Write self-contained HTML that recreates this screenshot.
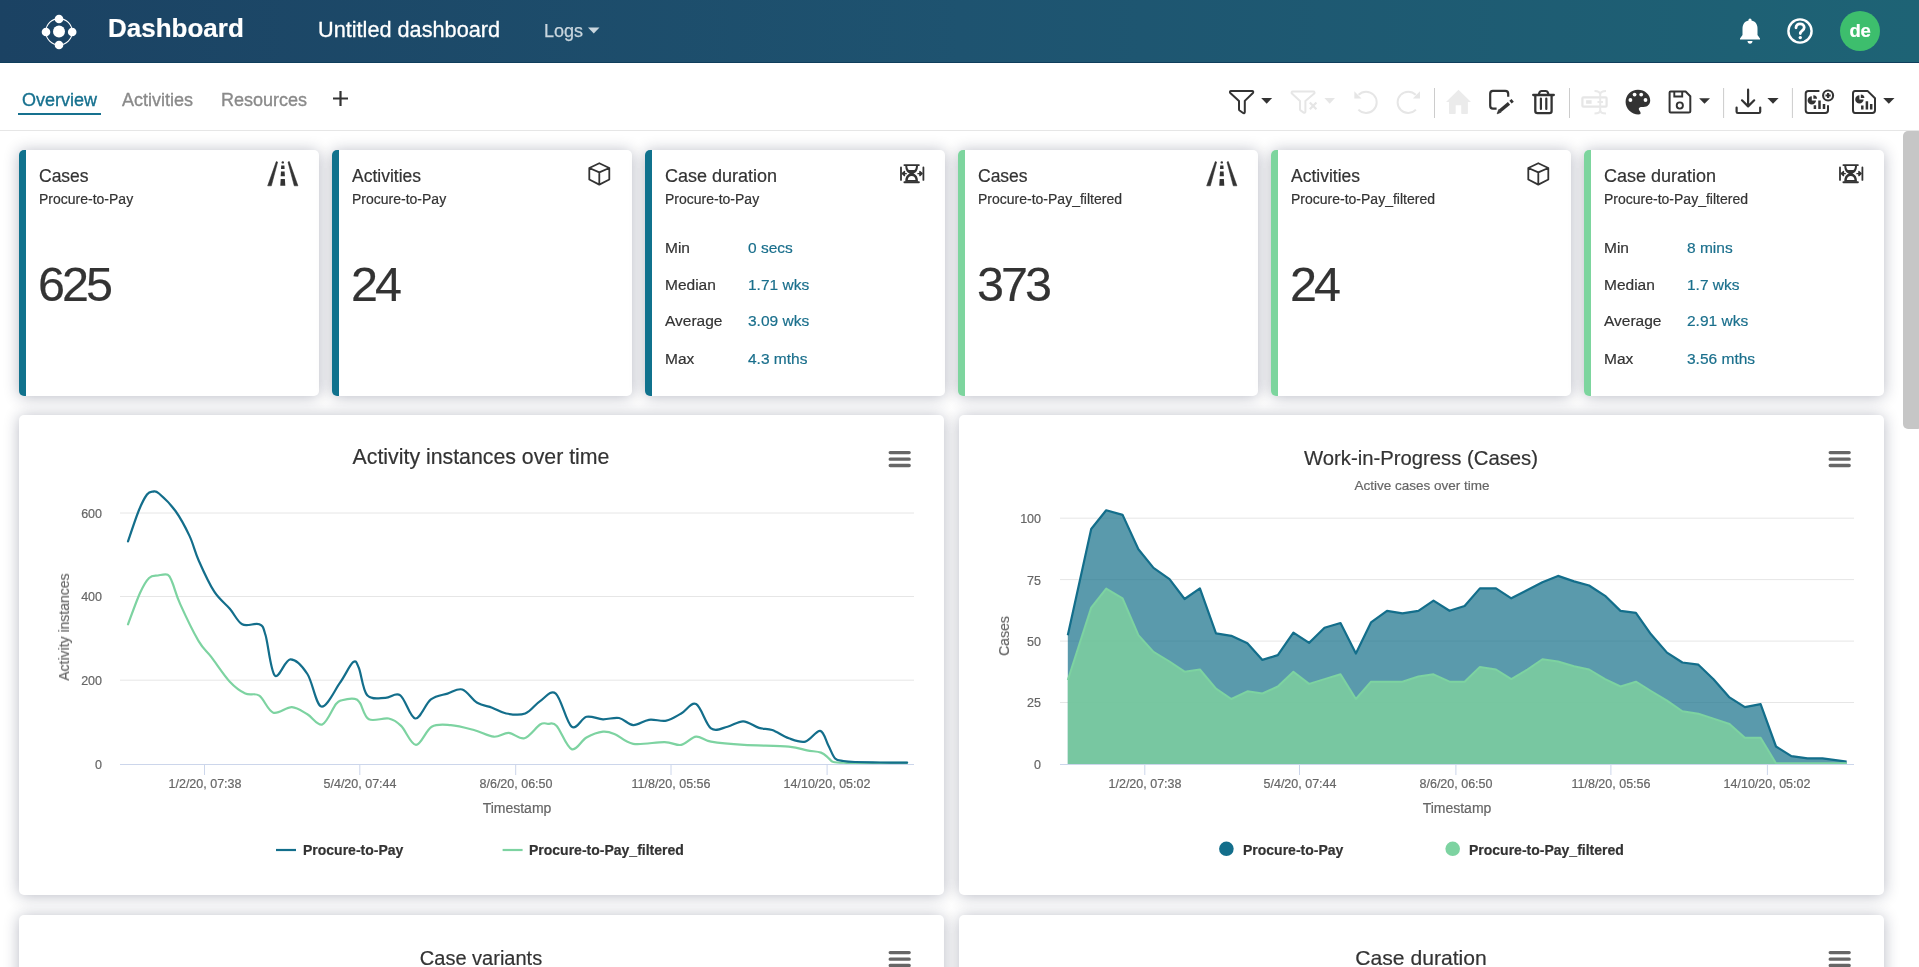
<!DOCTYPE html>
<html><head><meta charset="utf-8">
<style>
*{box-sizing:border-box;margin:0;padding:0}
html,body{width:1919px;height:967px;overflow:hidden;background:#fff;font-family:"Liberation Sans",sans-serif;color:#333;-webkit-font-smoothing:antialiased}
.abs{position:absolute}
#hdr{position:absolute;left:0;top:0;width:1919px;height:63px;border-bottom:1px solid #0f3e5c;background:linear-gradient(90deg,#1b4263 0%,#1e5370 50%,#1e6375 100%)}
.t{position:absolute;white-space:nowrap;line-height:1;will-change:transform;-webkit-text-stroke-width:0.2px}
#tabs{position:absolute;left:0;top:63px;width:1919px;height:68px;border-bottom:1px solid #e6e6e6;background:#fff}
.card{position:absolute;background:#fff;border-radius:5px;box-shadow:0 1px 15px rgba(20,25,60,0.3)}
.kpi{top:150px;width:300px;height:246px;overflow:hidden}
.kpi .bar{position:absolute;left:0;top:0;width:7px;height:100%}
.ch{top:415px;width:925px;height:480px}
.bt{top:915px;width:925px;height:100px}
#sb{position:absolute;left:1903px;top:131px;width:16px;height:836px;background:#fff}
#thumb{position:absolute;left:1903px;top:131px;width:20px;height:297.6px;background:#c6c6c6;border-radius:5px}
svg{position:absolute;overflow:visible}
</style></head><body>
<div id="hdr"></div>
<!-- logo -->
<svg class="abs" style="left:0;top:0" width="120" height="62">
  <circle cx="59" cy="31.8" r="13.2" fill="none" stroke="#fff" stroke-width="1.1"/>
  <circle cx="59" cy="31.5" r="6" fill="#fff"/>
  <circle cx="59" cy="19" r="4.3" fill="#fff"/>
  <circle cx="59" cy="45" r="4.3" fill="#fff"/>
  <circle cx="46" cy="32" r="4.3" fill="#fff"/>
  <circle cx="72.2" cy="32" r="4.3" fill="#fff"/>
</svg>
<div class="t" style="left:108px;top:15px;font-size:26px;font-weight:bold;color:#fff">Dashboard</div>
<div class="t" style="left:318px;top:18.5px;font-size:21.7px;color:#fff;-webkit-text-stroke:0.3px #fff">Untitled dashboard</div>
<div class="t" style="left:543.5px;top:21.5px;font-size:18px;color:#c9d6de;-webkit-text-stroke:0.25px #c9d6de">Logs</div>
<svg style="left:587px;top:27px" width="14" height="8"><path d="M1,0.5 L12.5,0.5 L6.75,6.5 Z" fill="#c9d6de"/></svg>

<!-- header right -->
<svg style="left:1738px;top:17px" width="24" height="28" viewBox="0 0 24 28">
  <path d="M12,1.5 C11,1.5 10.5,2.3 10.5,3 L10.5,3.6 C6.5,4.4 4.5,7.6 4.5,11.5 L4.5,18 L2,21.5 L2,22.5 L22,22.5 L22,21.5 L19.5,18 L19.5,11.5 C19.5,7.6 17.5,4.4 13.5,3.6 L13.5,3 C13.5,2.3 13,1.5 12,1.5 Z" fill="#fff"/>
  <path d="M9.5,24 L14.5,24 C14.5,25.5 13.5,26.8 12,26.8 C10.5,26.8 9.5,25.5 9.5,24 Z" fill="#fff"/>
</svg>
<svg style="left:1786px;top:17px" width="28" height="28" viewBox="0 0 28 28">
  <circle cx="14" cy="14" r="11.6" fill="none" stroke="#fff" stroke-width="2.4"/>
  <path d="M10,10.8 C10,8.3 11.8,6.8 14.1,6.8 C16.4,6.8 18.2,8.3 18.2,10.5 C18.2,13.5 14.3,13.6 14.3,16.6" fill="none" stroke="#fff" stroke-width="2.8" stroke-linecap="round"/>
  <circle cx="14.3" cy="20.6" r="1.7" fill="#fff"/>
</svg>
<div class="abs" style="left:1840px;top:10.5px;width:40px;height:40px;border-radius:50%;background:#3dbe6d"></div>
<div class="t" style="left:1840px;top:21.5px;width:40px;text-align:center;font-size:18.5px;font-weight:bold;letter-spacing:-0.3px;color:#fff">de</div>

<!-- tabs -->
<div id="tabs"></div>
<div class="t" style="left:22px;top:91px;font-size:18px;color:#17718f;-webkit-text-stroke:0.35px #17718f">Overview</div>
<div class="abs" style="left:18px;top:113px;width:83px;height:2px;background:#17718f"></div>
<div class="t" style="left:122px;top:91px;font-size:18px;color:#8a8a8a;-webkit-text-stroke:0.35px #8a8a8a">Activities</div>
<div class="t" style="left:221px;top:91px;font-size:18px;color:#8a8a8a;-webkit-text-stroke:0.35px #8a8a8a">Resources</div>
<svg style="left:332px;top:90px" width="17" height="17"><path d="M8.5,1 V16 M1,8.5 H16" stroke="#333" stroke-width="2.2"/></svg>

<!-- toolbar -->
<svg style="left:0;top:0" width="1919" height="130" viewBox="0 0 1919 130">
<path d="M1231,91 H1252.2 C1253.2,91 1253.6,92.2 1252.9,93 L1244.8,100.9 V112 C1244.8,113 1243.9,113.6 1243.1,113 L1239.6,110.5 C1239.2,110.2 1239,109.8 1239,109.3 V100.9 L1230.3,93 C1229.6,92.2 1230,91 1231,91 Z" fill="none" stroke="#333333" stroke-width="2" stroke-linejoin="round"/>
<path d="M1261.2,98.1 L1272.1,98.1 L1266.7,103.8 Z" fill="#333333"/>
<path d="M1292.6,91.6 H1313.5 C1314.5,91.6 1314.9,92.8 1314.2,93.6 L1305.4,100.9 V111.6 C1305.4,112.6 1304.5,113.2 1303.7,112.6 L1300.6,110.4 C1300.2,110.1 1300,109.7 1300,109.2 V100.9 L1291.9,93.6 C1291.2,92.8 1291.6,91.6 1292.6,91.6 Z" fill="none" stroke="#e6e6e6" stroke-width="2" stroke-linejoin="round"/>
<path d="M1309.8,102.4 L1316.4,109.2 M1316.4,102.4 L1309.8,109.2" stroke="#e6e6e6" stroke-width="2.2"/>
<path d="M1324.4,98.1 L1335.0,98.1 L1329.7,103.8 Z" fill="#e6e6e6"/>
<path d="M1358.6,94.8 A10.6,10.6 0 1 1 1358.4,109.6" fill="none" stroke="#e6e6e6" stroke-width="2"/>
<path d="M1354.3,91.2 V98.4 H1361.5 Z" fill="#e6e6e6"/>
<path d="M1415.7,94.8 A10.6,10.6 0 1 0 1415.9,109.6" fill="none" stroke="#e6e6e6" stroke-width="2"/>
<path d="M1420,91.2 V98.4 H1412.8 Z" fill="#e6e6e6"/>
<line x1="1434.5" x2="1434.5" y1="88" y2="118" stroke="#cccccc" stroke-width="1"/>
<line x1="1569.5" x2="1569.5" y1="88" y2="118" stroke="#cccccc" stroke-width="1"/>
<line x1="1723.6" x2="1723.6" y1="88" y2="118" stroke="#cccccc" stroke-width="1"/>
<line x1="1792.4" x2="1792.4" y1="88" y2="118" stroke="#cccccc" stroke-width="1"/>
<path d="M1458.5,89.7 L1471,101.9 H1467.9 V113 C1467.9,113.6 1467.4,114.1 1466.8,114.1 H1462.3 C1461.7,114.1 1461.2,113.6 1461.2,113 V105.3 H1455.7 V113 C1455.7,113.6 1455.2,114.1 1454.6,114.1 H1450.1 C1449.5,114.1 1449,113.6 1449,113 V101.9 H1446 Z" fill="#ebebeb"/>
<path d="M1508.2,96.8 V93.8 C1508.2,91.8 1507.2,90.9 1505.3,90.9 H1492.9 C1491,90.9 1490.2,91.8 1490.2,93.8 V105.8 C1490.2,107.7 1491,108.6 1492.9,108.6 H1496.6" fill="none" stroke="#333333" stroke-width="2.2"/>
<path d="M1499.8,111 L1509,103.4" stroke="#333333" stroke-width="3.5" stroke-linecap="butt"/>
<path d="M1500.9,112.3 L1498.7,109.7 L1497.2,113.8 Z" fill="#333333" stroke="#333333" stroke-width="0.8" stroke-linejoin="round"/>
<path d="M1510.5,102.2 L1512.7,100.4" stroke="#333333" stroke-width="3.5" stroke-linecap="butt"/>
<path d="M1533.2,95 H1553.8" stroke="#333333" stroke-width="2.3" stroke-linecap="round"/>
<path d="M1538.6,95 L1539.6,92.2 C1540,91.3 1540.6,91 1541.5,91 H1545.8 C1546.7,91 1547.3,91.3 1547.7,92.2 L1548.7,95" fill="none" stroke="#333333" stroke-width="2.2"/>
<path d="M1535.3,95 V111 C1535.3,112.5 1536.1,113.1 1537.5,113.1 H1549.5 C1550.9,113.1 1551.6,112.5 1551.6,111 V95" fill="none" stroke="#333333" stroke-width="2.3"/>
<path d="M1540.9,98.6 V109 M1546.3,98.6 V109" stroke="#333333" stroke-width="2.2" stroke-linecap="round"/>
<rect x="1582.4" y="97.3" width="24.2" height="9.4" rx="1" fill="none" stroke="#e6e6e6" stroke-width="2.2"/>
<rect x="1586.1" y="100.2" width="5.5" height="3.6" fill="#e6e6e6"/>
<path d="M1600.2,93.5 V111 M1594.5,91 C1597.5,91 1600.2,92 1600.2,94.5 C1600.2,92 1603,91 1606,91 M1594.5,113.5 C1597.5,113.5 1600.2,112.5 1600.2,110 C1600.2,112.5 1603,113.5 1606,113.5 M1597.5,102 H1603" fill="none" stroke="#e9e9e9" stroke-width="2"/>
<path d="M1637.9,89.7 C1644.8,89.7 1650.2,94.5 1650.2,100.3 C1650.2,104.3 1647.6,107 1643.5,107 H1641 C1639.6,107 1638.8,108 1638.8,109.1 C1638.8,109.9 1639.4,110.5 1639.9,111.3 C1640.4,112 1640.6,112.6 1640.6,113.2 C1640.6,114 1639.9,114.4 1638.4,114.4 C1631.6,114.4 1625.6,108.9 1625.6,102 C1625.6,95 1631,89.7 1637.9,89.7 Z" fill="#333333"/>
<circle cx="1634.6" cy="94.6" r="1.9" fill="#fff"/>
<circle cx="1641.2" cy="94.6" r="1.9" fill="#fff"/>
<circle cx="1630.4" cy="100.0" r="1.9" fill="#fff"/>
<circle cx="1645.5" cy="100.0" r="1.9" fill="#fff"/>
<path d="M1670.6,91.5 H1685.6 L1690.3,96.2 V111.5 C1690.3,112.3 1689.6,112.6 1688.8,112.6 H1670.6 C1669.9,112.6 1669.6,112.2 1669.6,111.5 V92.6 C1669.6,91.9 1669.9,91.5 1670.6,91.5 Z" fill="none" stroke="#333333" stroke-width="2" stroke-linejoin="round"/>
<path d="M1674.3,91.5 V96.5 H1682.2 V91.5" fill="none" stroke="#333333" stroke-width="1.9"/>
<circle cx="1679.8" cy="105.5" r="3.1" fill="none" stroke="#333333" stroke-width="1.9"/>
<path d="M1699.1,98.3 L1710.0,98.3 L1704.5,103.8 Z" fill="#333333"/>
<path d="M1748.1,89.7 V106 M1742,100.3 L1748.1,106.4 L1754.2,100.3" fill="none" stroke="#333333" stroke-width="2.2" stroke-linecap="round" stroke-linejoin="round"/>
<path d="M1736.6,107.6 V111.8 C1736.6,112.6 1737.1,113 1737.9,113 H1758.9 C1759.7,113 1760.2,112.6 1760.2,111.8 V107.6" fill="none" stroke="#333333" stroke-width="2.2" stroke-linecap="round"/>
<path d="M1767.4,98.1 L1778.6,98.1 L1773.0,103.8 Z" fill="#333333"/>
<path d="M1819.4,90.9 H1808.4 C1806.6,90.9 1805.7,91.8 1805.7,93.6 V110.2 C1805.7,112 1806.6,112.9 1808.4,112.9 H1825.3 C1827.1,112.9 1828,112 1828,110.2 V105.2" fill="none" stroke="#333333" stroke-width="2"/>
<path d="M1811.8,96.2 A4.2,4.2 0 1 0 1816,100.4 H1811.8 Z" fill="#333333"/>
<path d="M1813.4,95.2 A3.6,3.6 0 0 1 1817,98.8 H1813.4 Z" fill="#333333"/>
<path d="M1814.9,105.2 V109 M1819.5,100.6 V109 M1824,103.9 V109" stroke="#333333" stroke-width="2.5"/>
<circle cx="1828.1" cy="95.5" r="5" fill="none" stroke="#333333" stroke-width="2.1"/>
<path d="M1828.1,92.9 V98.1 M1825.5,95.5 H1830.7" stroke="#333333" stroke-width="2.2"/>
<path d="M1855,90.9 H1867.5 L1875,98.2 V110.2 C1875,112 1874.1,112.9 1872.3,112.9 H1855 C1853.8,112.9 1853,112 1853,110.2 V93.6 C1853,91.8 1853.8,90.9 1855,90.9 Z" fill="none" stroke="#333333" stroke-width="2" stroke-linejoin="round"/>
<path d="M1859.4,95.2 A4.2,4.2 0 1 0 1863.6,99.4 H1859.4 Z" fill="#333333"/>
<path d="M1860.8,94.4 A3.6,3.6 0 0 1 1864.4,98 H1860.8 Z" fill="#333333"/>
<path d="M1862.3,105.4 V109.6 M1866.9,101.2 V109.6 M1871.2,104 V109.6" stroke="#333333" stroke-width="2.5"/>
<path d="M1883.2,98.1 L1894.5,98.1 L1888.8,103.8 Z" fill="#333333"/>
</svg>

<!-- scrollbar -->
<div id="thumb"></div>

<!-- KPI cards -->
<div class="card kpi" style="left:19px"><div class="bar" style="background:#10728d"></div></div>
<div class="t" style="left:38.5px;top:167.8px;font-size:17.5px;color:#333;font-weight:normal;">Cases</div>
<div class="t" style="left:38.5px;top:191.5px;font-size:14.0px;color:#333;font-weight:normal;">Procure-to-Pay</div>
<svg style="left:267px;top:161px" width="32" height="26" viewBox="0 0 32 26"><path d="M9.3,0.6 L10.6,1.1 L4.3,24.8 H0.7 Z" fill="#333" stroke="#333" stroke-width="0.6" stroke-linejoin="round"/><path d="M22.3,0.6 L21,1.1 L27.3,24.8 H30.9 Z" fill="#333" stroke="#333" stroke-width="0.6" stroke-linejoin="round"/><circle cx="15.8" cy="1.4" r="1.2" fill="#333"/><path d="M14.2,4.6 H17.4 L17.6,7.9 H14 Z" fill="#333"/><path d="M14,10.4 H17.6 L17.9,15.3 H13.7 Z" fill="#333"/><path d="M13.7,17.9 H17.9 L18.3,24.8 H13.3 Z" fill="#333"/></svg>
<div class="t" style="left:38.0px;top:259.7px;font-size:48.5px;color:#333;font-weight:normal;letter-spacing:-3px">625</div>
<div class="card kpi" style="left:332px"><div class="bar" style="background:#10728d"></div></div>
<div class="t" style="left:351.5px;top:167.8px;font-size:17.5px;color:#333;font-weight:normal;">Activities</div>
<div class="t" style="left:351.5px;top:191.5px;font-size:14.0px;color:#333;font-weight:normal;">Procure-to-Pay</div>
<svg style="left:588px;top:162px" width="24" height="25" viewBox="0 0 24 25"><path d="M11.3,1.2 L21.3,6 V17.5 L11.3,22.6 L1.3,17.5 V6 Z M1.3,6 L11.3,10.4 L21.3,6 M11.3,10.4 V22.6" fill="none" stroke="#333" stroke-width="1.8" stroke-linejoin="round"/></svg>
<div class="t" style="left:351.0px;top:259.7px;font-size:48.5px;color:#333;font-weight:normal;letter-spacing:-3px">24</div>
<div class="card kpi" style="left:645px"><div class="bar" style="background:#10728d"></div></div>
<div class="t" style="left:664.5px;top:167.4px;font-size:18.0px;color:#333;font-weight:normal;">Case duration</div>
<div class="t" style="left:664.5px;top:191.5px;font-size:14.0px;color:#333;font-weight:normal;">Procure-to-Pay</div>
<svg style="left:899.0px;top:163.0px" width="27" height="22" viewBox="0 0 27 22"><path d="M2,4.4 V16.9 M24.4,4.4 V16.9" stroke="#333" stroke-width="1.8" stroke-linecap="round"/><path d="M3.2,10.6 L5.5,8.5 V12.7 Z M5,10.6 H7.8" fill="#333" stroke="#333" stroke-width="1.3" stroke-linejoin="round"/><path d="M23.2,10.6 L20.9,8.5 V12.7 Z M21.4,10.6 H18.4" fill="#333" stroke="#333" stroke-width="1.3" stroke-linejoin="round"/><path d="M6.3,2.5 C6.3,7 7.8,9.3 10.85,10.6 C7.8,11.9 6.3,14.2 6.3,18.7 H19 C19,14.2 17.5,11.9 14.45,10.6 C17.5,9.3 19,7 19,2.5 Z" fill="#333"/><path d="M8.3,2.9 H17 C16.9,5 16.3,6.4 15.3,6.9 H10 C9,6.4 8.4,5 8.3,2.9 Z" fill="#fff"/><path d="M8.8,16.9 C9,14.5 10.5,12.9 12.65,12.9 C14.8,12.9 16.3,14.5 16.5,16.9 Z" fill="#fff"/><path d="M5.4,2.1 H19.9 M5.4,19.2 H19.9" stroke="#333" stroke-width="1.9" stroke-linecap="round"/></svg>
<div class="t" style="left:664.5px;top:239.8px;font-size:15.5px;color:#333;font-weight:normal;">Min</div>
<div class="t" style="left:747.5px;top:239.8px;font-size:15.5px;color:#1a6f8c;font-weight:normal;">0 secs</div>
<div class="t" style="left:664.5px;top:276.6px;font-size:15.5px;color:#333;font-weight:normal;">Median</div>
<div class="t" style="left:747.5px;top:276.6px;font-size:15.5px;color:#1a6f8c;font-weight:normal;">1.71 wks</div>
<div class="t" style="left:664.5px;top:313.2px;font-size:15.5px;color:#333;font-weight:normal;">Average</div>
<div class="t" style="left:747.5px;top:313.2px;font-size:15.5px;color:#1a6f8c;font-weight:normal;">3.09 wks</div>
<div class="t" style="left:664.5px;top:350.6px;font-size:15.5px;color:#333;font-weight:normal;">Max</div>
<div class="t" style="left:747.5px;top:350.6px;font-size:15.5px;color:#1a6f8c;font-weight:normal;">4.3 mths</div>
<div class="card kpi" style="left:958px"><div class="bar" style="background:#7dd59e"></div></div>
<div class="t" style="left:977.5px;top:167.8px;font-size:17.5px;color:#333;font-weight:normal;">Cases</div>
<div class="t" style="left:977.5px;top:191.5px;font-size:14.0px;color:#333;font-weight:normal;">Procure-to-Pay_filtered</div>
<svg style="left:1206px;top:161px" width="32" height="26" viewBox="0 0 32 26"><path d="M9.3,0.6 L10.6,1.1 L4.3,24.8 H0.7 Z" fill="#333" stroke="#333" stroke-width="0.6" stroke-linejoin="round"/><path d="M22.3,0.6 L21,1.1 L27.3,24.8 H30.9 Z" fill="#333" stroke="#333" stroke-width="0.6" stroke-linejoin="round"/><circle cx="15.8" cy="1.4" r="1.2" fill="#333"/><path d="M14.2,4.6 H17.4 L17.6,7.9 H14 Z" fill="#333"/><path d="M14,10.4 H17.6 L17.9,15.3 H13.7 Z" fill="#333"/><path d="M13.7,17.9 H17.9 L18.3,24.8 H13.3 Z" fill="#333"/></svg>
<div class="t" style="left:977.0px;top:259.7px;font-size:48.5px;color:#333;font-weight:normal;letter-spacing:-3px">373</div>
<div class="card kpi" style="left:1271px"><div class="bar" style="background:#7dd59e"></div></div>
<div class="t" style="left:1290.5px;top:167.8px;font-size:17.5px;color:#333;font-weight:normal;">Activities</div>
<div class="t" style="left:1290.5px;top:191.5px;font-size:14.0px;color:#333;font-weight:normal;">Procure-to-Pay_filtered</div>
<svg style="left:1527px;top:162px" width="24" height="25" viewBox="0 0 24 25"><path d="M11.3,1.2 L21.3,6 V17.5 L11.3,22.6 L1.3,17.5 V6 Z M1.3,6 L11.3,10.4 L21.3,6 M11.3,10.4 V22.6" fill="none" stroke="#333" stroke-width="1.8" stroke-linejoin="round"/></svg>
<div class="t" style="left:1290.0px;top:259.7px;font-size:48.5px;color:#333;font-weight:normal;letter-spacing:-3px">24</div>
<div class="card kpi" style="left:1584px"><div class="bar" style="background:#7dd59e"></div></div>
<div class="t" style="left:1603.5px;top:167.4px;font-size:18.0px;color:#333;font-weight:normal;">Case duration</div>
<div class="t" style="left:1603.5px;top:191.5px;font-size:14.0px;color:#333;font-weight:normal;">Procure-to-Pay_filtered</div>
<svg style="left:1838.0px;top:163.0px" width="27" height="22" viewBox="0 0 27 22"><path d="M2,4.4 V16.9 M24.4,4.4 V16.9" stroke="#333" stroke-width="1.8" stroke-linecap="round"/><path d="M3.2,10.6 L5.5,8.5 V12.7 Z M5,10.6 H7.8" fill="#333" stroke="#333" stroke-width="1.3" stroke-linejoin="round"/><path d="M23.2,10.6 L20.9,8.5 V12.7 Z M21.4,10.6 H18.4" fill="#333" stroke="#333" stroke-width="1.3" stroke-linejoin="round"/><path d="M6.3,2.5 C6.3,7 7.8,9.3 10.85,10.6 C7.8,11.9 6.3,14.2 6.3,18.7 H19 C19,14.2 17.5,11.9 14.45,10.6 C17.5,9.3 19,7 19,2.5 Z" fill="#333"/><path d="M8.3,2.9 H17 C16.9,5 16.3,6.4 15.3,6.9 H10 C9,6.4 8.4,5 8.3,2.9 Z" fill="#fff"/><path d="M8.8,16.9 C9,14.5 10.5,12.9 12.65,12.9 C14.8,12.9 16.3,14.5 16.5,16.9 Z" fill="#fff"/><path d="M5.4,2.1 H19.9 M5.4,19.2 H19.9" stroke="#333" stroke-width="1.9" stroke-linecap="round"/></svg>
<div class="t" style="left:1603.5px;top:239.8px;font-size:15.5px;color:#333;font-weight:normal;">Min</div>
<div class="t" style="left:1686.5px;top:239.8px;font-size:15.5px;color:#1a6f8c;font-weight:normal;">8 mins</div>
<div class="t" style="left:1603.5px;top:276.6px;font-size:15.5px;color:#333;font-weight:normal;">Median</div>
<div class="t" style="left:1686.5px;top:276.6px;font-size:15.5px;color:#1a6f8c;font-weight:normal;">1.7 wks</div>
<div class="t" style="left:1603.5px;top:313.2px;font-size:15.5px;color:#333;font-weight:normal;">Average</div>
<div class="t" style="left:1686.5px;top:313.2px;font-size:15.5px;color:#1a6f8c;font-weight:normal;">2.91 wks</div>
<div class="t" style="left:1603.5px;top:350.6px;font-size:15.5px;color:#333;font-weight:normal;">Max</div>
<div class="t" style="left:1686.5px;top:350.6px;font-size:15.5px;color:#1a6f8c;font-weight:normal;">3.56 mths</div>

<!-- chart cards -->
<div class="card ch" style="left:19px"></div>
<div class="card ch" style="left:959px"></div>
<div class="card bt" style="left:19px"></div>
<div class="card bt" style="left:959px"></div>

<svg style="left:0;top:0" width="1919" height="967" viewBox="0 0 1919 967">
<line x1="120" x2="914" y1="513.0" y2="513.0" stroke="#e6e6e6" stroke-width="1"/>
<line x1="120" x2="914" y1="596.5" y2="596.5" stroke="#e6e6e6" stroke-width="1"/>
<line x1="120" x2="914" y1="680.2" y2="680.2" stroke="#e6e6e6" stroke-width="1"/>
<line x1="120" x2="914" y1="764.5" y2="764.5" stroke="#ccd6eb" stroke-width="1"/>
<line x1="204.5" x2="204.5" y1="764" y2="775" stroke="#ccd6eb" stroke-width="1"/>
<line x1="359.8" x2="359.8" y1="764" y2="775" stroke="#ccd6eb" stroke-width="1"/>
<line x1="515.7" x2="515.7" y1="764" y2="775" stroke="#ccd6eb" stroke-width="1"/>
<line x1="671.0" x2="671.0" y1="764" y2="775" stroke="#ccd6eb" stroke-width="1"/>
<line x1="827.1" x2="827.1" y1="764" y2="775" stroke="#ccd6eb" stroke-width="1"/>
<path d="M128.0,624.3 C130.0,619.1 136.5,600.7 140.0,593.0 C143.5,585.3 146.1,580.9 149.1,578.0 C152.1,575.1 154.9,576.0 158.0,575.5 C161.1,575.0 165.4,573.5 167.8,574.8 C170.2,576.0 170.4,578.1 172.5,583.0 C174.6,587.9 175.8,594.4 180.2,604.1 C184.6,613.8 193.6,632.6 198.8,641.4 C204.0,650.2 206.0,650.2 211.2,656.9 C216.4,663.6 224.1,675.6 229.8,681.7 C235.5,687.8 240.4,691.2 245.3,693.5 C250.2,695.8 254.6,692.5 259.3,695.7 C264.0,698.9 267.9,710.8 273.3,712.7 C278.7,714.6 286.2,706.8 291.9,707.1 C297.6,707.4 302.3,711.4 307.4,714.3 C312.5,717.2 317.5,726.2 322.3,724.5 C327.1,722.8 332.7,708.0 336.0,704.0 C339.3,700.0 338.9,701.1 342.0,700.2 C345.1,699.3 351.8,698.3 354.8,698.8 C357.8,699.3 357.6,699.6 360.0,703.0 C362.4,706.4 364.1,716.7 368.9,719.3 C373.7,721.9 383.3,717.4 388.7,718.5 C394.1,719.6 396.6,721.5 401.1,725.9 C405.7,730.3 410.9,744.8 416.0,744.9 C421.1,745.0 425.9,730.0 431.7,726.7 C437.5,723.4 443.8,724.6 450.8,725.1 C457.8,725.6 466.7,728.1 473.9,730.0 C481.1,731.9 488.0,736.2 493.8,736.7 C499.6,737.2 503.6,732.6 508.7,732.9 C513.8,733.2 519.2,739.7 524.4,738.3 C529.6,736.9 536.2,726.9 540.1,724.5 C544.0,722.1 545.2,723.6 548.0,723.8 C550.8,724.0 552.8,721.7 556.7,725.9 C560.6,730.1 566.6,747.2 571.6,749.1 C576.6,751.0 581.3,740.4 586.5,737.5 C591.7,734.6 598.2,732.2 603.0,731.7 C607.8,731.2 610.0,732.2 615.0,734.2 C620.0,736.2 624.9,742.5 633.2,743.8 C641.5,745.1 656.6,741.9 664.6,742.1 C672.6,742.3 676.0,745.8 681.2,744.9 C686.5,744.0 691.1,737.2 696.1,736.7 C701.1,736.2 703.0,740.2 711.0,741.6 C719.0,743.0 731.1,744.1 744.1,744.9 C757.1,745.7 778.3,745.7 788.8,746.6 C799.3,747.5 801.6,749.4 807.0,750.4 C812.4,751.4 817.4,751.3 821.0,752.6 C824.6,753.9 826.4,756.4 828.5,758.0 C830.6,759.6 830.4,761.2 833.4,762.0 C836.4,762.8 839.8,762.7 846.7,762.8 C853.6,762.9 864.9,762.8 875.0,762.8 C885.1,762.8 901.8,762.8 907.1,762.8" fill="none" stroke="#7dd3a1" stroke-width="2.2" stroke-linejoin="round" stroke-linecap="round"/>
<path d="M128.0,541.4 C129.8,536.2 135.8,517.8 139.0,510.0 C142.2,502.2 144.7,497.6 147.0,494.5 C149.3,491.4 151.0,491.8 153.0,491.6 C155.0,491.4 155.2,490.3 159.0,493.5 C162.8,496.7 170.4,503.9 175.5,511.0 C180.6,518.1 185.6,527.6 189.5,535.9 C193.4,544.2 194.7,551.4 198.8,560.7 C202.9,570.0 209.1,583.7 214.3,591.7 C219.5,599.7 225.2,603.4 229.8,608.8 C234.5,614.2 237.3,621.7 242.2,624.3 C247.1,626.9 255.4,622.5 259.3,624.3 C263.2,626.1 262.9,626.5 265.5,635.0 C268.1,643.5 270.7,671.4 274.8,675.5 C278.9,679.6 284.9,659.6 290.3,659.4 C295.7,659.1 302.2,666.1 307.4,674.0 C312.6,681.9 315.9,705.0 321.3,706.5 C326.7,708.0 334.6,690.3 339.9,682.9 C345.2,675.5 349.9,664.7 353.1,662.2 C356.3,659.7 356.5,662.5 358.9,668.0 C361.2,673.5 362.8,690.3 367.2,695.3 C371.6,700.3 379.9,697.8 385.4,697.8 C390.9,697.8 395.3,691.8 400.3,695.3 C405.3,698.8 410.1,717.8 415.2,718.5 C420.3,719.2 425.5,703.5 430.9,699.4 C436.3,695.2 442.3,695.2 447.5,693.6 C452.7,692.0 457.4,688.0 462.3,689.5 C467.2,691.0 472.2,699.7 477.2,702.7 C482.2,705.7 487.3,705.9 492.1,707.7 C496.9,709.5 500.7,712.5 506.2,713.5 C511.7,714.5 519.6,715.6 525.2,713.5 C530.9,711.4 535.0,704.4 540.1,701.1 C545.2,697.8 550.5,689.3 555.8,693.6 C561.0,697.9 566.5,722.8 571.6,726.7 C576.7,730.6 581.3,718.0 586.5,716.8 C591.7,715.6 597.6,719.1 603.0,719.3 C608.4,719.5 614.1,717.0 619.1,718.0 C624.1,719.0 628.2,724.8 633.2,725.1 C638.2,725.4 643.4,720.5 648.9,719.8 C654.4,719.0 660.9,721.6 666.3,720.6 C671.7,719.6 676.2,716.2 681.2,713.5 C686.2,710.8 691.1,701.6 696.1,704.1 C701.1,706.6 705.8,724.6 711.0,728.4 C716.2,732.2 722.1,727.9 727.5,726.7 C732.9,725.5 738.0,721.1 743.2,721.3 C748.5,721.5 754.2,726.4 759.0,727.9 C763.8,729.4 767.2,728.3 772.2,730.0 C777.2,731.7 783.3,736.4 788.8,738.3 C794.3,740.2 800.1,742.8 805.3,741.6 C810.5,740.4 816.3,730.2 820.2,730.9 C824.1,731.6 826.0,741.2 828.5,745.8 C831.0,750.4 832.6,756.0 835.1,758.5 C837.6,761.0 840.1,760.4 843.4,761.0 C846.7,761.6 848.9,761.8 855.0,762.0 C861.1,762.2 871.3,762.4 880.0,762.5 C888.7,762.6 902.6,762.6 907.1,762.6" fill="none" stroke="#136e8b" stroke-width="2.2" stroke-linejoin="round" stroke-linecap="round"/>
<line x1="1060" x2="1854" y1="518.2" y2="518.2" stroke="#e6e6e6" stroke-width="1"/>
<line x1="1060" x2="1854" y1="579.6" y2="579.6" stroke="#e6e6e6" stroke-width="1"/>
<line x1="1060" x2="1854" y1="641.1" y2="641.1" stroke="#e6e6e6" stroke-width="1"/>
<line x1="1060" x2="1854" y1="702.5" y2="702.5" stroke="#e6e6e6" stroke-width="1"/>
<path d="M1067.8,635.3 L1091.2,529.0 L1106.2,510.3 L1122.6,514.9 L1138.4,549.3 L1153.5,567.9 L1169.5,579.1 L1184.6,599.0 L1199.9,588.4 L1216.0,633.3 L1231.3,635.8 L1247.4,643.2 L1262.4,659.9 L1277.8,655.1 L1293.4,632.6 L1309.1,642.9 L1324.5,627.8 L1340.5,623.0 L1355.9,653.5 L1371.0,622.4 L1387.0,610.8 L1402.4,613.4 L1418.4,610.8 L1433.5,600.6 L1449.5,610.8 L1464.6,606.0 L1479.9,588.4 L1496.0,588.4 L1511.3,598.3 L1527.4,590.0 L1542.4,582.3 L1558.0,575.9 L1574.0,581.4 L1589.1,585.5 L1605.1,595.8 L1620.5,610.9 L1635.9,612.8 L1651.0,634.3 L1667.0,652.6 L1682.4,662.5 L1698.4,664.7 L1713.5,679.2 L1729.5,697.4 L1744.9,707.1 L1760.6,704.2 L1776.0,746.5 L1791.4,756.1 L1807.5,758.4 L1822.5,758.4 L1846.6,761.6 L1846.6,764 L1067.8,764 Z" fill="rgb(35,120,144)" fill-opacity="0.75" stroke="none"/>
<path d="M1067.8,635.3 L1091.2,529.0 L1106.2,510.3 L1122.6,514.9 L1138.4,549.3 L1153.5,567.9 L1169.5,579.1 L1184.6,599.0 L1199.9,588.4 L1216.0,633.3 L1231.3,635.8 L1247.4,643.2 L1262.4,659.9 L1277.8,655.1 L1293.4,632.6 L1309.1,642.9 L1324.5,627.8 L1340.5,623.0 L1355.9,653.5 L1371.0,622.4 L1387.0,610.8 L1402.4,613.4 L1418.4,610.8 L1433.5,600.6 L1449.5,610.8 L1464.6,606.0 L1479.9,588.4 L1496.0,588.4 L1511.3,598.3 L1527.4,590.0 L1542.4,582.3 L1558.0,575.9 L1574.0,581.4 L1589.1,585.5 L1605.1,595.8 L1620.5,610.9 L1635.9,612.8 L1651.0,634.3 L1667.0,652.6 L1682.4,662.5 L1698.4,664.7 L1713.5,679.2 L1729.5,697.4 L1744.9,707.1 L1760.6,704.2 L1776.0,746.5 L1791.4,756.1 L1807.5,758.4 L1822.5,758.4 L1846.6,761.6" fill="none" stroke="#136e8b" stroke-width="2.2" stroke-linejoin="round"/>
<path d="M1067.8,680.0 L1091.2,607.6 L1106.2,588.6 L1122.6,598.3 L1138.4,635.2 L1153.5,651.9 L1169.5,661.5 L1184.6,671.7 L1199.9,669.5 L1216.0,688.7 L1231.3,699.0 L1247.4,691.3 L1262.4,693.5 L1277.8,686.5 L1293.4,671.7 L1309.1,683.9 L1324.5,679.1 L1340.5,674.3 L1355.9,699.0 L1371.0,681.7 L1387.0,681.7 L1402.4,681.7 L1418.4,676.5 L1433.5,674.3 L1449.5,681.7 L1464.6,681.7 L1479.9,666.9 L1496.0,669.5 L1511.3,679.1 L1527.4,669.5 L1542.4,659.2 L1558.0,661.5 L1574.0,666.3 L1589.1,669.5 L1605.1,679.2 L1620.5,686.5 L1635.9,681.7 L1651.0,691.0 L1667.0,700.6 L1682.4,711.2 L1698.4,713.8 L1713.5,718.6 L1729.5,724.0 L1744.9,737.8 L1760.6,737.8 L1776.0,763.2 L1846.6,763.2 L1846.6,764 L1067.8,764 Z" fill="rgb(131,215,157)" fill-opacity="0.75" stroke="none"/>
<path d="M1067.8,680.0 L1091.2,607.6 L1106.2,588.6 L1122.6,598.3 L1138.4,635.2 L1153.5,651.9 L1169.5,661.5 L1184.6,671.7 L1199.9,669.5 L1216.0,688.7 L1231.3,699.0 L1247.4,691.3 L1262.4,693.5 L1277.8,686.5 L1293.4,671.7 L1309.1,683.9 L1324.5,679.1 L1340.5,674.3 L1355.9,699.0 L1371.0,681.7 L1387.0,681.7 L1402.4,681.7 L1418.4,676.5 L1433.5,674.3 L1449.5,681.7 L1464.6,681.7 L1479.9,666.9 L1496.0,669.5 L1511.3,679.1 L1527.4,669.5 L1542.4,659.2 L1558.0,661.5 L1574.0,666.3 L1589.1,669.5 L1605.1,679.2 L1620.5,686.5 L1635.9,681.7 L1651.0,691.0 L1667.0,700.6 L1682.4,711.2 L1698.4,713.8 L1713.5,718.6 L1729.5,724.0 L1744.9,737.8 L1760.6,737.8 L1776.0,763.2 L1846.6,763.2" fill="none" stroke="#7dd3a1" stroke-width="2" stroke-linejoin="round"/>
<line x1="1060" x2="1854" y1="764.5" y2="764.5" stroke="#ccd6eb" stroke-width="1"/>
<line x1="1144.8" x2="1144.8" y1="764" y2="775" stroke="#ccd6eb" stroke-width="1"/>
<line x1="1299.5" x2="1299.5" y1="764" y2="775" stroke="#ccd6eb" stroke-width="1"/>
<line x1="1455.9" x2="1455.9" y1="764" y2="775" stroke="#ccd6eb" stroke-width="1"/>
<line x1="1610.9" x2="1610.9" y1="764" y2="775" stroke="#ccd6eb" stroke-width="1"/>
<line x1="1767.4" x2="1767.4" y1="764" y2="775" stroke="#ccd6eb" stroke-width="1"/>
</svg>

<div class="t" style="left:481.3px;top:446.9px;width:0;font-size:21.3px;color:#333;font-weight:normal;"><span style="position:absolute;left:0;transform:translateX(-50%)">Activity instances over time</span></div>
<svg style="left:887.5px;top:449px" width="24" height="20" viewBox="0 0 24 20"><path d="M2.2,3.6 H21.2 M2.2,10.2 H21.2 M2.2,16.5 H21.2" stroke="#666" stroke-width="3.3" stroke-linecap="round"/></svg>
<div class="t" style="left:204.5px;top:777.5px;width:0;font-size:12.5px;color:#666666;font-weight:normal;"><span style="position:absolute;left:0;transform:translateX(-50%)">1/2/20, 07:38</span></div>
<div class="t" style="left:359.8px;top:777.5px;width:0;font-size:12.5px;color:#666666;font-weight:normal;"><span style="position:absolute;left:0;transform:translateX(-50%)">5/4/20, 07:44</span></div>
<div class="t" style="left:515.7px;top:777.5px;width:0;font-size:12.5px;color:#666666;font-weight:normal;"><span style="position:absolute;left:0;transform:translateX(-50%)">8/6/20, 06:50</span></div>
<div class="t" style="left:671.0px;top:777.5px;width:0;font-size:12.5px;color:#666666;font-weight:normal;"><span style="position:absolute;left:0;transform:translateX(-50%)">11/8/20, 05:56</span></div>
<div class="t" style="left:827.1px;top:777.5px;width:0;font-size:12.5px;color:#666666;font-weight:normal;"><span style="position:absolute;left:0;transform:translateX(-50%)">14/10/20, 05:02</span></div>
<div class="t" style="left:517.0px;top:801.2px;width:0;font-size:14.0px;color:#666666;font-weight:normal;"><span style="position:absolute;left:0;transform:translateX(-50%)">Timestamp</span></div>
<div class="t" style="left:1421.3px;top:447.7px;width:0;font-size:20.3px;color:#333;font-weight:normal;"><span style="position:absolute;left:0;transform:translateX(-50%)">Work-in-Progress (Cases)</span></div>
<svg style="left:1827.5px;top:449px" width="24" height="20" viewBox="0 0 24 20"><path d="M2.2,3.6 H21.2 M2.2,10.2 H21.2 M2.2,16.5 H21.2" stroke="#666" stroke-width="3.3" stroke-linecap="round"/></svg>
<div class="t" style="left:1144.5px;top:777.5px;width:0;font-size:12.5px;color:#666666;font-weight:normal;"><span style="position:absolute;left:0;transform:translateX(-50%)">1/2/20, 07:38</span></div>
<div class="t" style="left:1299.8px;top:777.5px;width:0;font-size:12.5px;color:#666666;font-weight:normal;"><span style="position:absolute;left:0;transform:translateX(-50%)">5/4/20, 07:44</span></div>
<div class="t" style="left:1455.7px;top:777.5px;width:0;font-size:12.5px;color:#666666;font-weight:normal;"><span style="position:absolute;left:0;transform:translateX(-50%)">8/6/20, 06:50</span></div>
<div class="t" style="left:1611.0px;top:777.5px;width:0;font-size:12.5px;color:#666666;font-weight:normal;"><span style="position:absolute;left:0;transform:translateX(-50%)">11/8/20, 05:56</span></div>
<div class="t" style="left:1767.1px;top:777.5px;width:0;font-size:12.5px;color:#666666;font-weight:normal;"><span style="position:absolute;left:0;transform:translateX(-50%)">14/10/20, 05:02</span></div>
<div class="t" style="left:1457.0px;top:801.2px;width:0;font-size:14.0px;color:#666666;font-weight:normal;"><span style="position:absolute;left:0;transform:translateX(-50%)">Timestamp</span></div>
<div class="t" style="left:101.5px;top:507.9px;width:0;font-size:12.5px;color:#666666;font-weight:normal;"><span style="position:absolute;right:0">600</span></div>
<div class="t" style="left:101.5px;top:591.4px;width:0;font-size:12.5px;color:#666666;font-weight:normal;"><span style="position:absolute;right:0">400</span></div>
<div class="t" style="left:101.5px;top:675.1px;width:0;font-size:12.5px;color:#666666;font-weight:normal;"><span style="position:absolute;right:0">200</span></div>
<div class="t" style="left:101.5px;top:758.9px;width:0;font-size:12.5px;color:#666666;font-weight:normal;"><span style="position:absolute;right:0">0</span></div>
<div class="t" style="left:1041.3px;top:513.1px;width:0;font-size:12.5px;color:#666666;font-weight:normal;"><span style="position:absolute;right:0">100</span></div>
<div class="t" style="left:1041.3px;top:574.5px;width:0;font-size:12.5px;color:#666666;font-weight:normal;"><span style="position:absolute;right:0">75</span></div>
<div class="t" style="left:1041.3px;top:636.0px;width:0;font-size:12.5px;color:#666666;font-weight:normal;"><span style="position:absolute;right:0">50</span></div>
<div class="t" style="left:1041.3px;top:697.4px;width:0;font-size:12.5px;color:#666666;font-weight:normal;"><span style="position:absolute;right:0">25</span></div>
<div class="t" style="left:1041.3px;top:758.9px;width:0;font-size:12.5px;color:#666666;font-weight:normal;"><span style="position:absolute;right:0">0</span></div>
<div class="t" style="left:64px;top:627px;width:0;height:0;font-size:14px;color:#666666"><span style="position:absolute;left:0;top:0;transform:translate(-50%,-50%) rotate(-90deg)">Activity instances</span></div>
<div class="t" style="left:1003.5px;top:636px;width:0;height:0;font-size:14px;color:#666666"><span style="position:absolute;left:0;top:0;transform:translate(-50%,-50%) rotate(-90deg)">Cases</span></div>
<div class="t" style="left:1421.5px;top:478.6px;width:0;font-size:13.5px;color:#666666;font-weight:normal;"><span style="position:absolute;left:0;transform:translateX(-50%)">Active cases over time</span></div>
<svg style="left:0;top:0" width="1919" height="967"><path d="M276,850 H296" stroke="#136e8b" stroke-width="2.2"/><path d="M502.6,850 H522.6" stroke="#7dd3a1" stroke-width="2.2"/><circle cx="1226.4" cy="848.8" r="7.3" fill="#136e8b"/><circle cx="1452.7" cy="848.8" r="7.3" fill="#7dd3a1"/></svg>
<div class="t" style="left:303.1px;top:842.9px;font-size:14.0px;color:#333;font-weight:bold;">Procure-to-Pay</div>
<div class="t" style="left:529.4px;top:842.9px;font-size:14.0px;color:#333;font-weight:bold;">Procure-to-Pay_filtered</div>
<div class="t" style="left:1243.1px;top:842.9px;font-size:14.0px;color:#333;font-weight:bold;">Procure-to-Pay</div>
<div class="t" style="left:1469.4px;top:842.9px;font-size:14.0px;color:#333;font-weight:bold;">Procure-to-Pay_filtered</div>
<div class="t" style="left:481.3px;top:947.6px;width:0;font-size:20.0px;color:#333;font-weight:normal;"><span style="position:absolute;left:0;transform:translateX(-50%)">Case variants</span></div>
<div class="t" style="left:1421.4px;top:946.8px;width:0;font-size:21.1px;color:#333;font-weight:normal;"><span style="position:absolute;left:0;transform:translateX(-50%)">Case duration</span></div>
<svg style="left:887.5px;top:949px" width="24" height="20" viewBox="0 0 24 20"><path d="M2.2,3.6 H21.2 M2.2,10.2 H21.2 M2.2,16.5 H21.2" stroke="#666" stroke-width="3.3" stroke-linecap="round"/></svg>
<svg style="left:1827.5px;top:949px" width="24" height="20" viewBox="0 0 24 20"><path d="M2.2,3.6 H21.2 M2.2,10.2 H21.2 M2.2,16.5 H21.2" stroke="#666" stroke-width="3.3" stroke-linecap="round"/></svg>
</body></html>
